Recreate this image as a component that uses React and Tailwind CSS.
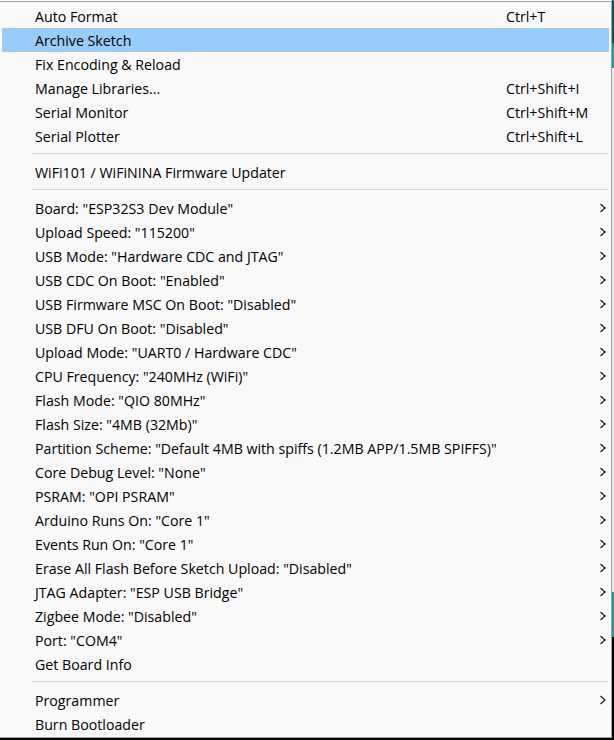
import React from 'react';

const topItems = [
  { label: 'Auto Format', shortcut: 'Ctrl+T' },
  { label: 'Archive Sketch', active: true },
  { label: 'Fix Encoding & Reload' },
  { label: 'Manage Libraries...', shortcut: 'Ctrl+Shift+I' },
  { label: 'Serial Monitor', shortcut: 'Ctrl+Shift+M' },
  { label: 'Serial Plotter', shortcut: 'Ctrl+Shift+L' },
];

const boardItems = [
  'Board: "ESP32S3 Dev Module"',
  'Upload Speed: "115200"',
  'USB Mode: "Hardware CDC and JTAG"',
  'USB CDC On Boot: "Enabled"',
  'USB Firmware MSC On Boot: "Disabled"',
  'USB DFU On Boot: "Disabled"',
  'Upload Mode: "UART0 / Hardware CDC"',
  'CPU Frequency: "240MHz (WiFi)"',
  'Flash Mode: "QIO 80MHz"',
  'Flash Size: "4MB (32Mb)"',
  'Partition Scheme: "Default 4MB with spiffs (1.2MB APP/1.5MB SPIFFS)"',
  'Core Debug Level: "None"',
  'PSRAM: "OPI PSRAM"',
  'Arduino Runs On: "Core 1"',
  'Events Run On: "Core 1"',
  'Erase All Flash Before Sketch Upload: "Disabled"',
  'JTAG Adapter: "ESP USB Bridge"',
  'Zigbee Mode: "Disabled"',
  'Port: "COM4"',
];

function Chevron() {
  return (
    <svg width="8" height="10" viewBox="0 0 8 10" className="text-[#222]">
      <polyline points="1.5,1 6,5 1.5,9" fill="none" stroke="currentColor" strokeWidth="1.3" />
    </svg>
  );
}

function MenuItem({ label, shortcut, submenu, active }) {
  return (
    <div className={`mx-[2px] flex h-6 items-center ${active ? 'bg-[#99ccf8]' : ''}`}>
      <span className="flex-1 translate-y-px whitespace-nowrap pl-[33px]">{label}</span>
      <span className="w-[84px] translate-y-px whitespace-nowrap">{shortcut}</span>
      <span className="flex w-[19px] items-center pl-[9px]">{submenu && <Chevron />}</span>
    </div>
  );
}

function Separator() {
  return (
    <div className="flex h-3 items-start pt-[5px]">
      <div className="ml-[32px] mr-[3px] h-px flex-1 bg-[#d7d7d7]" />
    </div>
  );
}

export default function App() {
  return (
    <div
      className="flex h-[740px] w-[614px] overflow-hidden bg-black text-[14.2px] text-black"
      style={{ fontFamily: '"Open Sans", "Noto Sans", sans-serif' }}
    >
      <div className="flex w-[612px] flex-col">
        <div className="h-px bg-[#f9f9f9]" />
        <div className="border-y border-r border-[#a0a0a0] bg-[#f9f9f9] pb-px pt-[2px]">
          {topItems.map((item) => (
            <MenuItem key={item.label} {...item} />
          ))}
          <Separator />
          <MenuItem label="WiFi101 / WiFiNINA Firmware Updater" />
          <Separator />
          {boardItems.map((label) => (
            <MenuItem key={label} label={label} submenu />
          ))}
          <MenuItem label="Get Board Info" />
          <Separator />
          <MenuItem label="Programmer" submenu />
          <MenuItem label="Burn Bootloader" />
        </div>
      </div>
      <div className="flex w-[2px] flex-col">
        <div className="h-[43px] bg-[#005a5e]" />
        <div className="h-[25px] bg-[#17a1a5]" />
        <div className="h-[524px] bg-[#efefef]" />
        <div className="h-[45px] bg-[#17a1a5]" />
        <div className="flex-1 bg-black" />
      </div>
    </div>
  );
}
